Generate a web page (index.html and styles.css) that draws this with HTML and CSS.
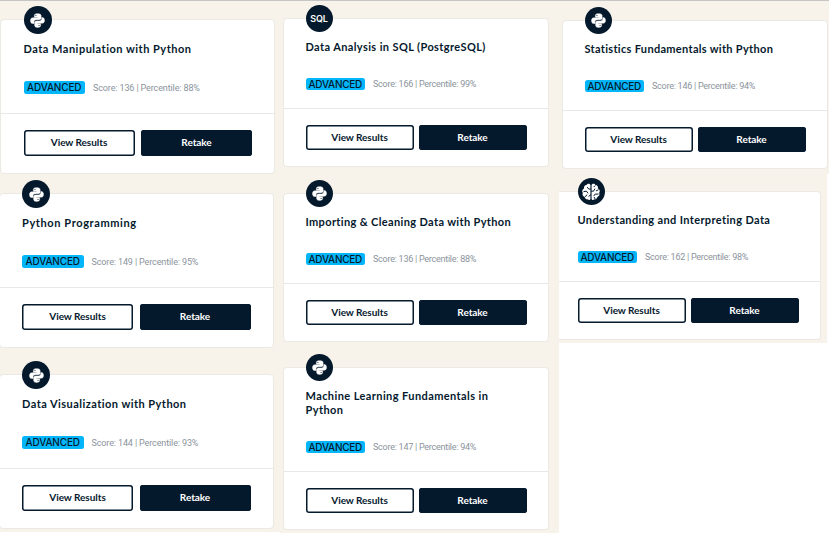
FILE: index.html
```html
<!DOCTYPE html>
<html lang="en">
<head>
<meta charset="utf-8">
<title>Skill assessments</title>
<link rel="stylesheet" href="styles.css">
</head>
<body>
<svg width="0" height="0" class="defs" aria-hidden="true">
  <symbol id="python" viewBox="0 0 24 24">
    <g fill="#fff" stroke="#fff" stroke-width=".7">
    <path d="M12 1c-3.400 0-5 1-5 3v2.700h5.300v1H4.500C2 7.700.8 9.600.8 12.200s1.200 4.600 3.600 4.600H6.500v-2.600c0-2 1.500-3.400 3.500-3.400h5c1.700 0 2.800-1.200 2.800-2.800V4c0-2-2.200-3-5.800-3z"/>
    <path d="M12 23c3.400 0 5-1 5-3v-2.700h-5.300v-1h7.800c2.500 0 3.700-1.900 3.700-4.500s-1.200-4.600-3.600-4.600H18.800v2.100c0 2-1.500 3.500-3.500 3.500h-5c-1.700 0-2.900 1.200-2.900 2.900V20c0 2 2.200 3 4.600 3z"/>
    </g>
    <circle cx="9.500" cy="4" r=".9" fill="#05192d"/>
    <circle cx="14.500" cy="20" r=".9" fill="#05192d"/>
  </symbol>
  <symbol id="brain" viewBox="0 0 24 24">
    <path fill="#fff" d="M11.300 3.500C10.500 1.500 7.500 1.500 6.700 3.600 4.300 3.700 3 5.800 3.800 7.800 1.500 8.700.8 11.300 2.200 13c-1 2.300.2 4.500 2.200 5 .4 2.200 2.100 3.100 3.800 2.800 1 1.200 3.100.8 3.100-.8zM12.700 3.500c.8-2 3.800-2 4.600.1 2.400.1 3.700 2.200 2.900 4.200 2.300.9 3 3.500 1.600 5.200 1 2.300-.2 4.500-2.200 5-.4 2.200-2.100 3.100-3.800 2.800-1 1.200-3.100.8-3.100-.8z"/>
    <path fill="none" stroke="#05192d" stroke-width="1.200" stroke-linecap="round" d="M11.500 8.500H9.300L7.800 6.500M3.500 11.500l3-.5 1.800 2.200M5.500 17.500l1.300-2M11.500 15.500l-2 1.500M12.500 11h2.500l1.500-2.500M20.500 9.500l-2 1M20.500 14.500h-3.500l-1.500 2M16 18.500l.8 1.500M16.800 4.500l-1.300 1.300"/>
  </symbol>
</svg>
<main class="board">
  <div class="column column-first">
    <article class="card large t-manipulation">
      <div class="icon"><svg><use href="#python"/></svg></div>
      <div class="body"><h2>Data Manipulation with Python</h2>
        <div class="meta"><span class="badge">ADVANCED</span><span class="score">Score: 136 | Percentile: 88%</span></div></div>
      <div class="actions"><button>View Results</button><button class="primary">Retake</button></div>
    </article>
    <article class="card large flush t-programming">
      <div class="icon"><svg><use href="#python"/></svg></div>
      <div class="body"><h2>Python Programming</h2>
        <div class="meta"><span class="badge">ADVANCED</span><span class="score">Score: 149 | Percentile: 95%</span></div></div>
      <div class="actions"><button>View Results</button><button class="primary">Retake</button></div>
    </article>
    <article class="card large flush t-visualization">
      <div class="icon"><svg><use href="#python"/></svg></div>
      <div class="body"><h2>Data Visualization with Python</h2>
        <div class="meta"><span class="badge">ADVANCED</span><span class="score">Score: 144 | Percentile: 93%</span></div></div>
      <div class="actions"><button>View Results</button><button class="primary">Retake</button></div>
    </article>
  </div>
  <div class="column column-middle">
    <article class="card t-sql">
      <div class="icon sql">SQL</div>
      <div class="body"><h2>Data Analysis in SQL (PostgreSQL)</h2>
        <div class="meta"><span class="badge">ADVANCED</span><span class="score">Score: 166 | Percentile: 99%</span></div></div>
      <div class="actions"><button>View Results</button><button class="primary">Retake</button></div>
    </article>
    <article class="card t-importing">
      <div class="icon"><svg><use href="#python"/></svg></div>
      <div class="body"><h2>Importing &amp; Cleaning Data with Python</h2>
        <div class="meta"><span class="badge">ADVANCED</span><span class="score">Score: 136 | Percentile: 88%</span></div></div>
      <div class="actions"><button>View Results</button><button class="primary">Retake</button></div>
    </article>
    <article class="card tall t-learning">
      <div class="icon"><svg><use href="#python"/></svg></div>
      <div class="body"><h2>Machine Learning Fundamentals in<br>Python</h2>
        <div class="meta"><span class="badge">ADVANCED</span><span class="score">Score: 147 | Percentile: 94%</span></div></div>
      <div class="actions"><button>View Results</button><button class="primary">Retake</button></div>
    </article>
  </div>
  <div class="column column-last">
    <div class="panel panel-top">
      <article class="card t-statistics">
        <div class="icon"><svg><use href="#python"/></svg></div>
        <div class="body"><h2>Statistics Fundamentals with Python</h2>
          <div class="meta"><span class="badge">ADVANCED</span><span class="score">Score: 146 | Percentile: 94%</span></div></div>
        <div class="actions"><button>View Results</button><button class="primary">Retake</button></div>
      </article>
    </div>
    <div class="panel panel-bottom">
      <article class="card cut t-interpreting">
        <div class="icon"><svg class="brain"><use href="#brain"/></svg></div>
        <div class="body"><h2>Understanding and Interpreting Data</h2>
          <div class="meta"><span class="badge">ADVANCED</span><span class="score">Score: 162 | Percentile: 98%</span></div></div>
        <div class="actions"><button>View Results</button><button class="primary">Retake</button></div>
      </article>
    </div>
  </div>
</main>
</body>
</html>
```
FILE: styles.css
```css
* { box-sizing: border-box; }
body { margin: 0; background: #fff; color: #05192d; font-family: Lato, "Liberation Sans", sans-serif; overflow: hidden; }
.defs { display: none; }
.board { display: flex; height: 533px; border-top: 1px solid #c6c6c6; }
.column { display: flow-root; flex: none; background: #f7f3eb; }
.column-first { width: 280px; height: 531px; }
.column-middle { width: 279px; padding-left: 3px; }
.column-last { width: 270px; background: #fff; }
.panel { background: #f7f3eb; display: flow-root; }
.panel-top { height: 173px; padding-left: 3px; }
.panel-bottom { width: 268px; height: 169px; }

.card {
  --side: 21.500px;
  position: relative;
  width: 266px;
  height: 149px;
  display: flex;
  flex-direction: column;
  background: #fff;
  border: 1px solid #ebe9e4;
  border-radius: 4px;
}
.body { height: 90px; padding: 21px 0 0 var(--side); border-bottom: 1px solid #e8e8e5; }
h2 { margin: 0; height: 38px; font-size: 11px; font-weight: 700; line-height: 14px; white-space: nowrap; letter-spacing: var(--track); }
.meta { display: flex; align-items: center; height: 12px; }
.badge {
  width: 59.500px; height: 12px; border-radius: 2.500px; background: #03b6fc;
  font: 500 10px/12px Inter, sans-serif; letter-spacing: -.25px; text-align: center;
}
.score { margin-left: 8px; font: 400 9px/12px Roboto, sans-serif; letter-spacing: -.25px; color: #8b939c; white-space: nowrap; }
.actions { display: flex; gap: 5px; padding: 16px 0 0 var(--side); }
button {
  width: 108px; height: 25px; padding: 0 0 2px; border: 0; border-radius: 3px;
  box-shadow: inset 0 0 0 1.500px #05192d;
  background: #fff; color: #05192d; font: 700 10px/20px Lato, sans-serif; letter-spacing: -.05px;
}
button.primary { background: #05192d; color: #fff; }

.icon {
  position: absolute; left: 21.500px; top: -14px; width: 27px; height: 27px; border-radius: 50%;
  display: flex; align-items: center; justify-content: center; background: #05192d; color: #fff;
}
.icon svg { width: 15px; height: 15px; }
.icon svg.brain { width: 20px; height: 20px; }
.icon.sql { font: 600 9px/27px Inter, sans-serif; letter-spacing: -.1px; }

.large { --side: 22px; width: 275px; height: 155px; }
.large .body { height: 94px; padding-top: 22px; }
.large h2 { height: 39px; }
.large .meta, .large .badge { height: 13px; line-height: 13px; }
.large .badge { width: 61.500px; letter-spacing: -.15px; }
.large .score { letter-spacing: -.12px; }
.large .actions { padding-top: 16px; gap: 6.500px; }
.large button { width: 111px; height: 26px; }
.large.flush { margin-left: -1px; }
.large .icon { left: 22px; width: 28px; height: 28px; }

.tall { height: 163px; }
.tall .body { height: 104px; }
.tall h2 { height: 52px; }

.cut { width: 262px; --side: 18.500px; border-left: 0; border-radius: 0 4px 4px 0; }
.cut .icon { left: 18.500px; }

.t-manipulation { margin-top: 18px; --side: 22.500px; --track: .5px; }
.t-manipulation .icon { left: 22.500px; }
.t-programming { margin-top: 19px; --track: .61px; }
.t-visualization { margin-top: 26px; --track: .46px; }
.t-sql { margin-top: 17px; --track: .39px; }
.t-importing { margin-top: 26px; --track: .36px; }
.t-learning { margin-top: 25px; --track: .41px; }
.t-statistics { margin-top: 19px; --track: .31px; }
.t-interpreting { margin-top: 17px; --track: .37px; }
```
